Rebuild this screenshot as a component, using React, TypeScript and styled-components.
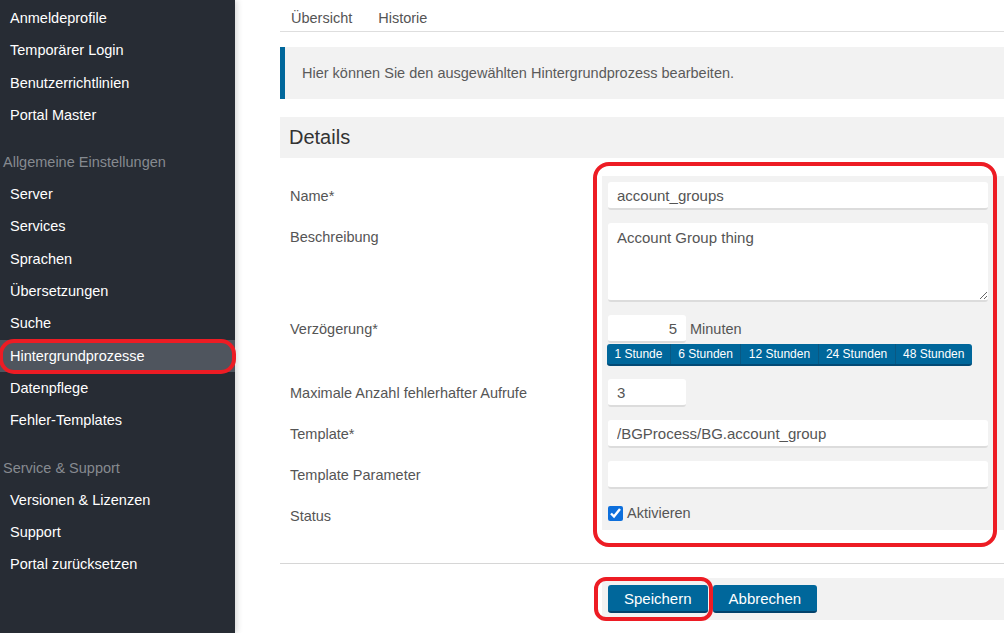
import React from "react";
import styled, { createGlobalStyle } from "styled-components";

const GlobalStyle = createGlobalStyle`
  html, body {
    margin: 0;
    padding: 0;
    height: 100%;
  }
  body {
    font-family: "Liberation Sans", Arial, sans-serif;
    background: #fff;
    overflow: hidden;
  }
  #root {
    height: 100%;
  }
`;

const Page = styled.div`
  position: relative;
  display: flex;
  width: 1004px;
  height: 633px;
  overflow: hidden;
`;

const Sidebar = styled.nav`
  width: 235px;
  flex-shrink: 0;
  padding-top: 2px;
  background: #272c34;
  box-shadow: 2px 0 6px rgba(0, 0, 0, 0.16);
  z-index: 1;
`;

const NavItem = styled.div<{ $active?: boolean }>`
  height: 32.3px;
  line-height: 32.3px;
  padding-left: 10px;
  font-size: 14.5px;
  color: #fff;
  background: ${(p) => (p.$active ? "#4f555e" : "transparent")};
`;

const NavSection = styled.div`
  margin-top: 15px;
  height: 32px;
  line-height: 32px;
  padding-left: 3px;
  font-size: 14.5px;
  color: #868a90;
`;

const Main = styled.main`
  flex: 1;
  padding-left: 45px;
  min-width: 0;
`;

const Tabs = styled.div`
  display: flex;
  gap: 4px;
  height: 31px;
  border-bottom: 1px solid #dedede;
`;

const Tab = styled.div`
  padding: 5px 11px 0;
  line-height: 26px;
  font-size: 14.5px;
  color: #555;
`;

const Info = styled.div`
  display: flex;
  align-items: center;
  margin-top: 15px;
  height: 52px;
  padding-left: 17px;
  background: #f2f2f2;
  border-left: 5px solid #00679b;
  font-size: 14.5px;
  color: #5a5a5a;
`;

const SectionHeader = styled.h2`
  margin: 18px 0 0;
  height: 41px;
  line-height: 41px;
  padding-left: 9px;
  background: #f2f2f2;
  font-size: 20px;
  font-weight: 400;
  color: #333;
`;

const Form = styled.div`
  margin-top: 18px;
`;

const Row = styled.div`
  display: flex;
`;

const Label = styled.div`
  width: 322px;
  flex-shrink: 0;
  box-sizing: border-box;
  padding: 6px 0 0 10px;
  line-height: 28px;
  font-size: 14.5px;
  color: #555;
`;

const FieldCell = styled.div<{ $bottom?: number }>`
  flex: 1;
  background: #f2f2f2;
  padding: 6px 16px ${(p) => p.$bottom ?? 7}px 6px;
`;

const TextInput = styled.input<{ $small?: boolean; $right?: boolean }>`
  display: block;
  box-sizing: border-box;
  width: ${(p) => (p.$small ? "78px" : "100%")};
  height: 28px;
  padding: 0 9px;
  border: none;
  border-bottom: 2px solid #dcdcdc;
  border-radius: 3px;
  background: #fff;
  font-family: "Liberation Sans", Arial, sans-serif;
  font-size: 15px;
  color: #555;
  text-align: ${(p) => (p.$right ? "right" : "left")};
  outline: none;
`;

const TextArea = styled.textarea`
  display: block;
  box-sizing: border-box;
  width: 100%;
  height: 79px;
  padding: 6px 9px;
  border: none;
  border-bottom: 2px solid #dcdcdc;
  border-radius: 3px;
  background: #fff;
  font-family: "Liberation Sans", Arial, sans-serif;
  font-size: 15px;
  line-height: 18px;
  color: #555;
  resize: vertical;
  outline: none;
`;

const Inline = styled.div`
  display: flex;
  align-items: center;
`;

const Unit = styled.span`
  margin-left: 4px;
  font-size: 14.5px;
  color: #555;
`;

const QuickGroup = styled.div`
  display: inline-flex;
  margin: 1px 0 0 -1px;
  border-radius: 3px;
  border-bottom: 2px solid #034a75;
  background: #00679b;
  overflow: hidden;
`;

const QuickButton = styled.button`
  height: 20px;
  padding: 0 7.4px;
  border: none;
  border-left: 1px solid #0a5882;
  background: transparent;
  font-family: "Liberation Sans", Arial, sans-serif;
  font-size: 12px;
  color: #fff;
  &:first-child {
    border-left: none;
  }
`;

const Check = styled.label`
  display: flex;
  align-items: center;
  height: 22px;
  font-size: 14.5px;
  color: #555;
  input {
    width: 15px;
    height: 15px;
    margin: 0 4px 0 0;
    accent-color: #0d6fdc;
  }
`;

const Divider = styled.div`
  margin-top: 33px;
  border-top: 1px solid #d6d6d6;
`;

const Footer = styled.div`
  display: flex;
  gap: 5px;
  margin: 14px 0 0 322px;
  padding: 7px 6px;
  background: #f2f2f2;
`;

const Button = styled.button`
  height: 28px;
  padding: 0 16px;
  border: none;
  border-bottom: 2px solid #03426b;
  border-radius: 3px;
  background: #00679b;
  font-family: "Liberation Sans", Arial, sans-serif;
  font-size: 15px;
  color: #fff;
`;

const Marker = styled.div<{ $radius: number }>`
  position: absolute;
  box-sizing: border-box;
  border: 4px solid #ed1c24;
  border-radius: ${(p) => p.$radius}px;
  pointer-events: none;
  z-index: 5;
`;

const topItems = ["Anmeldeprofile", "Temporärer Login", "Benutzerrichtlinien", "Portal Master"];
const generalItems = [
  "Server",
  "Services",
  "Sprachen",
  "Übersetzungen",
  "Suche",
  "Hintergrundprozesse",
  "Datenpflege",
  "Fehler-Templates",
];
const supportItems = ["Versionen & Lizenzen", "Support", "Portal zurücksetzen"];
const quickPicks = ["1 Stunde", "6 Stunden", "12 Stunden", "24 Stunden", "48 Stunden"];

const App = () => {
  return (
    <Page>
      <GlobalStyle />
      <Sidebar>
        {topItems.map((i) => (
          <NavItem key={i}>{i}</NavItem>
        ))}
        <NavSection>Allgemeine Einstellungen</NavSection>
        {generalItems.map((i) => (
          <NavItem key={i} $active={i === "Hintergrundprozesse"}>
            {i}
          </NavItem>
        ))}
        <NavSection>Service &amp; Support</NavSection>
        {supportItems.map((i) => (
          <NavItem key={i}>{i}</NavItem>
        ))}
      </Sidebar>

      <Main>
        <Tabs>
          <Tab>Übersicht</Tab>
          <Tab>Historie</Tab>
        </Tabs>
        <Info>Hier können Sie den ausgewählten Hintergrundprozess bearbeiten.</Info>
        <SectionHeader>Details</SectionHeader>

        <Form>
          <Row>
            <Label>Name*</Label>
            <FieldCell>
              <TextInput defaultValue="account_groups" />
            </FieldCell>
          </Row>
          <Row>
            <Label>Beschreibung</Label>
            <FieldCell>
              <TextArea defaultValue="Account Group thing" />
            </FieldCell>
          </Row>
          <Row>
            <Label>Verzögerung*</Label>
            <FieldCell>
              <Inline>
                <TextInput $small $right defaultValue="5" />
                <Unit>Minuten</Unit>
              </Inline>
              <QuickGroup>
                {quickPicks.map((q) => (
                  <QuickButton key={q}>{q}</QuickButton>
                ))}
              </QuickGroup>
            </FieldCell>
          </Row>
          <Row>
            <Label>Maximale Anzahl fehlerhafter Aufrufe</Label>
            <FieldCell>
              <TextInput $small defaultValue="3" />
            </FieldCell>
          </Row>
          <Row>
            <Label>Template*</Label>
            <FieldCell>
              <TextInput defaultValue="/BGProcess/BG.account_group" />
            </FieldCell>
          </Row>
          <Row>
            <Label>Template Parameter</Label>
            <FieldCell>
              <TextInput defaultValue="" />
            </FieldCell>
          </Row>
          <Row>
            <Label>Status</Label>
            <FieldCell $bottom={4}>
              <Check>
                <input type="checkbox" defaultChecked />
                Aktivieren
              </Check>
            </FieldCell>
          </Row>
        </Form>

        <Divider />
        <Footer>
          <Button>Speichern</Button>
          <Button>Abbrechen</Button>
        </Footer>
      </Main>

      {/* red annotation marks drawn over the screenshot */}
      <Marker $radius={15} style={{ left: -1, top: 339, width: 237, height: 35 }} />
      <Marker $radius={16} style={{ left: 593, top: 162, width: 404, height: 385 }} />
      <Marker $radius={12} style={{ left: 594, top: 577, width: 119, height: 44 }} />
    </Page>
  );
};

export default App;
